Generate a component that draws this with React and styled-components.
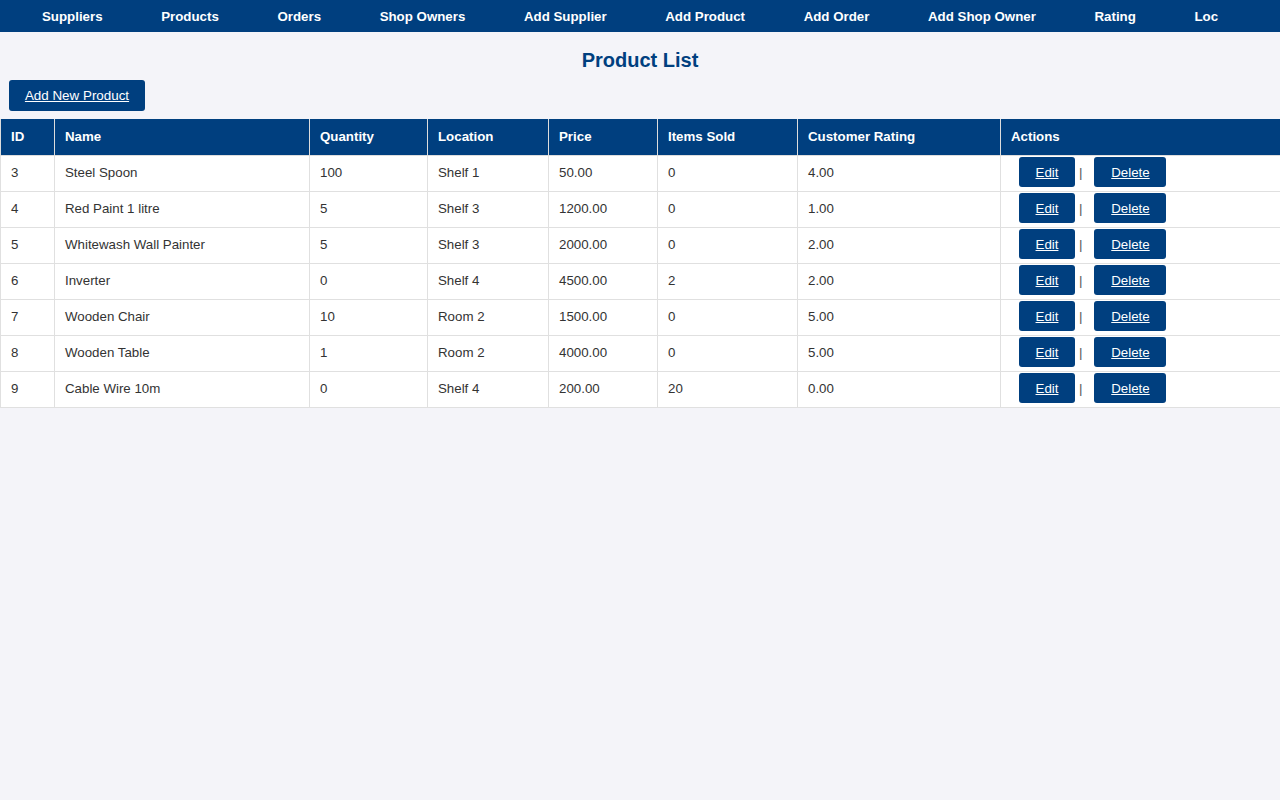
import React from 'react';
import styled, { createGlobalStyle } from 'styled-components';

const GlobalStyle = createGlobalStyle`
  body {
    margin: 0;
    background-color: #f4f4f9;
    font-family: 'Liberation Sans', Arial, sans-serif;
    color: #333;
  }
`;

const NavBar = styled.nav`
  display: flex;
  align-items: center;
  height: 32px;
  padding-left: 42px;
  gap: 58.6px;
  background-color: #003f7f;
  overflow: hidden;
  white-space: nowrap;
`;

const NavLink = styled.a`
  color: #fff;
  font-weight: bold;
  font-size: 13.3px;
  text-decoration: none;
`;

const Title = styled.h2`
  margin: 17px 0 8px;
  text-align: center;
  font-size: 20px;
  color: #003f7f;
`;

const PrimaryButton = styled.a`
  display: inline-flex;
  align-items: center;
  justify-content: center;
  height: 31px;
  width: 136px;
  margin-left: 9px;
  background-color: #003f7f;
  color: #fff;
  font-size: 13.4px;
  text-decoration: underline;
  border-radius: 3px;
`;

const Table = styled.table`
  width: 100%;
  margin-top: 8px;
  border-collapse: collapse;
  background-color: #fff;
  font-size: 13.3px;
  table-layout: fixed;
`;

const HeadCell = styled.th`
  height: 36px;
  padding: 0 10px;
  text-align: left;
  background-color: #003f7f;
  color: #fff;
  font-weight: bold;
  border: 1px solid #dddddd;
  border-top: none;
  box-sizing: border-box;
`;

const Cell = styled.td`
  height: 36px;
  padding: 0 10px 1px;
  border: 1px solid #e0e0e0;
  color: #333;
  box-sizing: border-box;
`;

const ActionCell = styled(Cell)`
  padding: 0 0 2px 18px;
`;

const Actions = styled.div`
  display: flex;
  align-items: center;
  color: #555;
`;

const ActionButton = styled.a`
  display: inline-flex;
  align-items: center;
  justify-content: center;
  height: 30px;
  padding-top: 1px;
  box-sizing: border-box;
  width: ${(p) => p.$width}px;
  background-color: #003f7f;
  color: #fff;
  font-size: 13.3px;
  text-decoration: underline;
  border-radius: 3px;
`;

const Sep = styled.span`
  margin: 0 12px 0 4px;
`;

const navItems = [
  'Suppliers',
  'Products',
  'Orders',
  'Shop Owners',
  'Add Supplier',
  'Add Product',
  'Add Order',
  'Add Shop Owner',
  'Rating',
  'Loc',
];

const columns = [
  ['ID', 54],
  ['Name', 255],
  ['Quantity', 118],
  ['Location', 121],
  ['Price', 109],
  ['Items Sold', 140],
  ['Customer Rating', 203],
  ['Actions', 280],
];

const products = [
  [3, 'Steel Spoon', 100, 'Shelf 1', '50.00', 0, '4.00'],
  [4, 'Red Paint 1 litre', 5, 'Shelf 3', '1200.00', 0, '1.00'],
  [5, 'Whitewash Wall Painter', 5, 'Shelf 3', '2000.00', 0, '2.00'],
  [6, 'Inverter', 0, 'Shelf 4', '4500.00', 2, '2.00'],
  [7, 'Wooden Chair', 10, 'Room 2', '1500.00', 0, '5.00'],
  [8, 'Wooden Table', 1, 'Room 2', '4000.00', 0, '5.00'],
  [9, 'Cable Wire 10m', 0, 'Shelf 4', '200.00', 20, '0.00'],
];

const App = () => {
  return (
    <>
      <GlobalStyle />
      <NavBar>
        {navItems.map((item) => (
          <NavLink key={item} href="#">
            {item}
          </NavLink>
        ))}
      </NavBar>

      <Title>Product List</Title>
      <PrimaryButton href="#">Add New Product</PrimaryButton>

      <Table>
        <colgroup>
          {columns.map(([name, width]) => (
            <col key={name} style={{ width }} />
          ))}
        </colgroup>
        <thead>
          <tr>
            {columns.map(([name]) => (
              <HeadCell key={name}>{name}</HeadCell>
            ))}
          </tr>
        </thead>
        <tbody>
          {products.map((row) => (
            <tr key={row[0]}>
              {row.map((value, i) => (
                <Cell key={i}>{value}</Cell>
              ))}
              <ActionCell>
                <Actions>
                  <ActionButton href="#" $width={56}>Edit</ActionButton>
                  <Sep>|</Sep>
                  <ActionButton href="#" $width={72}>Delete</ActionButton>
                </Actions>
              </ActionCell>
            </tr>
          ))}
        </tbody>
      </Table>
    </>
  );
};

export default App;
